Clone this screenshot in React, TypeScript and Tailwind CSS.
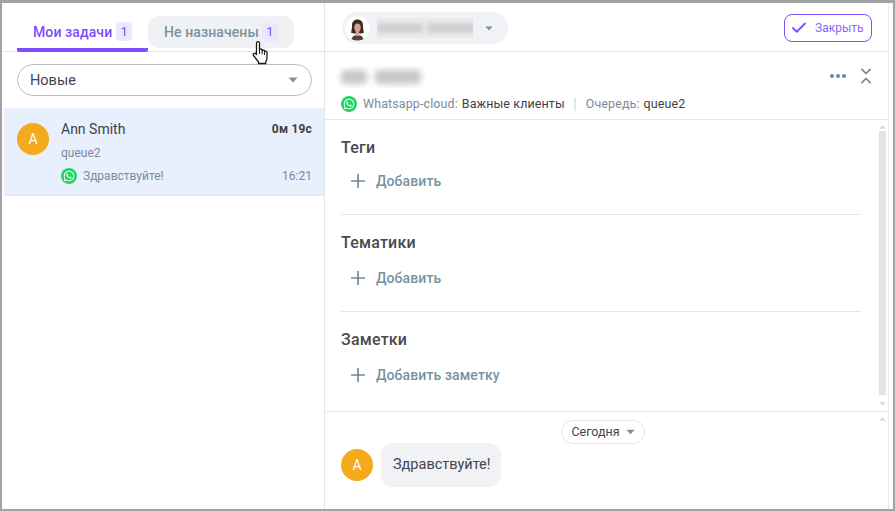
import { ChevronsDownUp, Check, Plus } from 'lucide-react';
import { FaWhatsapp } from 'react-icons/fa';

function Caret({ className }: { className: string }) {
  return (
    <svg viewBox="0 0 10 6" className={className}>
      <path d="M0.5 0.5h9L5 5.5z" fill="currentColor" />
    </svg>
  );
}

function Avatar() {
  return (
    <div className="flex h-8 w-8 shrink-0 items-center justify-center rounded-full bg-[#f5a91c] text-[14px] text-white">
      A
    </div>
  );
}

function WhatsappIcon() {
  return (
    <div className="flex h-4 w-4 shrink-0 items-center justify-center rounded-full bg-[#25d366] text-white">
      <FaWhatsapp className="h-3 w-3" />
    </div>
  );
}

function Face() {
  return (
    <svg viewBox="0 0 25 25" className="h-[25px] w-[25px] rounded-full bg-white">
      <path d="M12.500 3.500C9 3.500 7 6 7 9.500c0 3-.5 5.500-1 7 1.500.8 3 1 4.500 1h4c1.500 0 3-.2 4.500-1-.5-1.500-1-4-1-7 0-3.500-2-6-5.500-6z" fill="#3f2a29" />
      <path d="M6.500 23c.7-2.800 2.800-4 6-4s5.300 1.200 6 4c-1.700 1-3.700 1.500-6 1.500s-4.300-.5-6-1.500z" fill="#4f4342" />
      <path d="M12.500 7.500c-2 0-3.200 1.600-3.200 3.900 0 2.700 1.400 4.800 3.200 4.800s3.200-2.100 3.200-4.800c0-2.300-1.200-3.900-3.200-3.900z" fill="#d8a18f" />
      <path d="M10.900 15h3.200v5h-3.200z" fill="#d8a18f" />
    </svg>
  );
}

function Hand() {
  return (
    <svg viewBox="0 0 18 24" className="absolute top-[38px] left-[248px] h-[24px] w-[18px]">
      <path
        d="M4.500 2.200c0-2 3-2 3 0V9c0-1.400 2.600-1.400 2.600 0v1c0-1.400 2.500-1.400 2.500 0v1c0-1.300 2.400-1.300 2.400 0v5.500c0 1.700-.5 3-1.200 4.200v1.800H6.500v-1.500L1.500 14.500c-1-1.500.9-3.200 2.300-1.800l.7.800z"
        fill="#fff"
        stroke="#1c1c1c"
        strokeWidth="1.300"
        strokeLinejoin="round"
      />
      <path d="M7.500 9v4M10.100 10v3.500M12.600 11v3" stroke="#1c1c1c" strokeWidth="1" fill="none" />
    </svg>
  );
}

function Section({ title, action, first, last }: { title: string; action: string; first?: boolean; last?: boolean }) {
  return (
    <section className={`pt-[15px] ${last ? '' : 'border-b border-[#e3e5e8] pb-[20px]'}`}>
      <h3 className="text-[16px] leading-[26px] font-medium tracking-[0.2px] text-[#4a4a50]">{title}</h3>
      <button className={`${first ? 'mt-[7px]' : 'mt-[9px]'} flex h-[26px] items-center pl-[6px] text-[14px] font-medium tracking-[0.1px] text-[#7a929f]`}>
        <Plus className="mr-[7px] h-[22px] w-[22px] text-[#6f8a99]" strokeWidth={1.800} />
        {action}
      </button>
    </section>
  );
}

export default function App() {
  return (
    <div className="flex h-[511px] w-[895px] border-x-2 border-t-[3px] border-b-2 border-[#a3a3a3] bg-white font-['Roboto',sans-serif] text-[#3f3f46]">
      {/* left column: tabs, filter, task list */}
      <aside className="ml-[2px] flex w-[321px] shrink-0 flex-col border-r border-[#e3e5e8]">
        <div className="relative flex h-[49px] shrink-0 items-end border-b border-[#e3e5e8] pl-[13px]">
          <div className="-mb-px flex h-[33px] w-[131px] items-start rounded-b-[2px] border-b-[4px] border-[#7c4dff] pt-[3px] pl-[16px]">
            <span className="text-[14px] leading-[20px] font-medium tracking-[0.1px] text-[#7c4dff]">Мои задачи</span>
            <span className="ml-[4px] flex h-[19px] w-[16px] items-center justify-center rounded-[4px] bg-[#ece7fd] text-[13px] text-[#7c4dff]">1</span>
          </div>
          <div className="mb-[3px] flex h-[32px] w-[146px] items-center rounded-[10px] bg-[#f0f1f4] pl-[16px]">
            <span className="text-[14px] font-medium tracking-[0.1px] text-[#7a929f]">Не назначены</span>
            <span className="ml-[3px] flex h-[19px] w-[16px] items-center justify-center rounded-[4px] bg-[#ece7fd] text-[13px] text-[#7c4dff]">1</span>
          </div>
          <Hand />
        </div>

        <div className="flex shrink-0 py-[12px] pl-[13px]">
          <div className="flex h-[32px] w-[295px] shrink-0 items-center justify-between rounded-full border border-[#b9bdc9] pr-[13px] pl-[12px]">
            <span className="pt-px text-[14.500px] text-[#44444c]">Новые</span>
            <Caret className="h-[6px] w-[10px] text-[#7a929f]" />
          </div>
        </div>

        <div className="flex h-[88px] shrink-0 gap-[12px] border-b border-[#e3e5e8] bg-[#e8f0fe] pt-[15px] pr-[12px] pl-[13px]">
          <Avatar />
          <div className="flex min-w-0 flex-1 flex-col">
            <div className="-mt-[4px] flex h-[20px] items-center justify-between">
              <span className="text-[14px] text-[#3f3f46]">Ann Smith</span>
              <span className="text-[12px] font-bold tracking-[0.2px] text-[#3f3f46]">0м 19с</span>
            </div>
            <span className="mt-[5px] text-[12px] leading-[18px] text-[#7d8a9c]">queue2</span>
            <div className="mt-[6px] flex h-[16px] items-center">
              <WhatsappIcon />
              <span className="ml-[6px] text-[12px] text-[#7d8a9c]">Здравствуйте!</span>
              <span className="ml-auto text-[12px] text-[#7d8a9c]">16:21</span>
            </div>
          </div>
        </div>
      </aside>

      {/* right column */}
      <main className="mr-[4px] flex min-w-0 flex-1 flex-col border-r border-[#eceef0]">
        <header className="flex h-[49px] shrink-0 items-center justify-between border-b border-[#e3e5e8] pt-[2px] pr-[16px] pl-[17px]">
          <div className="flex h-[32px] w-[166px] items-center rounded-full bg-[#f1f2f5] pl-[3px]">
            <Face />
            <div className="ml-[7px] flex h-[20px] w-[96px] items-center gap-[4px] overflow-hidden bg-[#ececee]">
              <div className="h-[10px] w-[46px] shrink-0 bg-[#cfd0d2] blur-[2px]" />
              <div className="h-[10px] w-[48px] shrink-0 bg-[#cfd0d2] blur-[2px]" />
            </div>
            <Caret className="ml-[12px] h-[5px] w-[8px] text-[#7a929f]" />
          </div>
          <button className="flex h-[28px] w-[88px] items-center rounded-[8px] border border-[#7c4dff] pl-[5px] text-[12px] text-[#8a66ff]">
            <Check className="h-[18px] w-[18px] text-[#7c4dff]" strokeWidth={2.400} />
            <span className="ml-[7px]">Закрыть</span>
          </button>
        </header>

        <div className="flex h-[68px] shrink-0 flex-col border-b border-[#e3e5e8] pl-[16px]">
          <div className="flex h-[44px] items-start justify-between">
            <div className="mt-[14px] -ml-[6px] flex h-[22px] w-[90px] items-center gap-[8px] overflow-hidden pl-[6px]">
              <div className="h-[14px] w-[26px] shrink-0 rounded-[4px] bg-[#c6c6c6] blur-[3px]" />
              <div className="h-[14px] w-[46px] shrink-0 rounded-[4px] bg-[#c6c6c6] blur-[3px]" />
            </div>
            <div className="mt-[14px] mr-[12px] flex h-[20px] items-center gap-[10px]">
              <div className="flex gap-[2px]">
                <span className="h-[4px] w-[4px] rounded-full bg-[#6f8a99]" />
                <span className="h-[4px] w-[4px] rounded-full bg-[#6f8a99]" />
                <span className="h-[4px] w-[4px] rounded-full bg-[#6f8a99]" />
              </div>
              <ChevronsDownUp className="h-[20px] w-[20px] text-[#6f8a99]" strokeWidth={2} />
            </div>
          </div>
          <div className="flex h-[16px] items-center text-[12.500px] tracking-[0.1px]">
            <WhatsappIcon />
            <span className="ml-[6px] text-[#7d8a9c]">Whatsapp-cloud:</span>
            <span className="ml-[4px] text-[#3f3f46]">Важные клиенты</span>
            <span className="mr-[10px] ml-[9px] h-[13px] w-[2px] bg-[#e3e5e8]" />
            <span className="text-[#7d8a9c]">Очередь:</span>
            <span className="ml-[4px] text-[#3f3f46]">queue2</span>
          </div>
        </div>

        <div className="flex h-[292px] shrink-0 border-b border-[#e3e5e8]">
          <div className="w-[536px] shrink-0 pl-[16px]">
            <Section title="Теги" action="Добавить" first />
            <Section title="Тематики" action="Добавить" />
            <Section title="Заметки" action="Добавить заметку" last />
          </div>
          <div className="ml-[18px] flex w-[7px] flex-col items-center pt-[5px]">
            <Caret className="h-[4px] w-[7px] rotate-180 text-[#d6d8da]" />
            <div className="mt-[2px] h-[264px] w-[7px] bg-[#e2e5e5]" />
            <Caret className="mt-[7px] h-[4px] w-[7px] text-[#d6d8da]" />
          </div>
        </div>

        <div className="flex min-h-0 flex-1 pl-[16px]">
          <div className="flex w-[538px] shrink-0 flex-col pt-[8px]">
            <div className="ml-[220px] flex h-[24px] w-[84px] items-center justify-center rounded-full border border-[#e3e5e8] text-[12.500px] text-[#44444c]">
              Сегодня
              <Caret className="ml-[6px] h-[6px] w-[9px] text-[#7a929f]" />
            </div>
            <div className="-mt-px flex items-center gap-[8px]">
              <Avatar />
              <div className="flex h-[44px] w-[120px] items-center rounded-[12px] bg-[#f1f2f6] pl-[12px] text-[14.500px] text-[#44444c]">
                Здравствуйте!
              </div>
            </div>
          </div>
          <Caret className="mt-[5px] h-[4px] w-[7px] rotate-180 text-[#d6d8da]" />
        </div>
      </main>
    </div>
  );
}
